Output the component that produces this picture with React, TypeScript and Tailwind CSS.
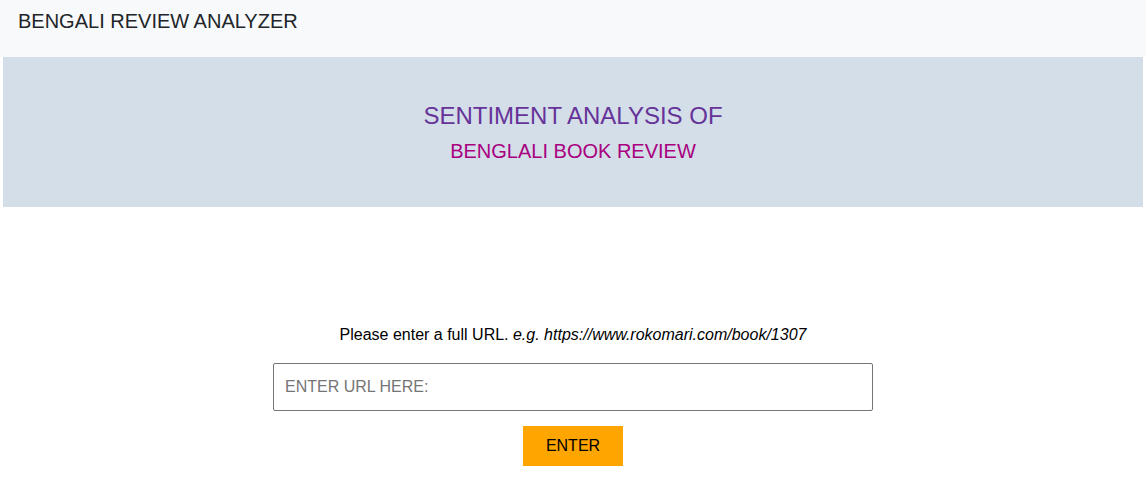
export default function App() {
  return (
    <div className="min-h-[477px] bg-white font-['Liberation_Sans',Arial,sans-serif] text-[#212529]">
      <header className="h-[57px] bg-[#f8f9fa] flex items-center px-[18px]">
        <span className="text-[20px] leading-none text-[#212529] -mt-[15px]">BENGALI REVIEW ANALYZER</span>
      </header>
      <section className="mx-[3px] h-[150px] bg-[#d3dee9] flex flex-col items-center">
        <h1 className="mt-[45px] text-[24px] leading-[28px] text-[#663399]">SENTIMENT ANALYSIS OF</h1>
        <h2 className="mt-[9px] text-[20px] leading-[24px] text-[#a8007e]">BENGLALI BOOK REVIEW</h2>
      </section>
      <div className="flex flex-col items-center pt-[117px]">
        <p className="text-[16px] leading-[22px] text-black">
          Please enter a full URL. <i>e.g. https://www.rokomari.com/book/1307</i>
        </p>
        <input
          type="text"
          placeholder="ENTER URL HERE:"
          className="mt-[17px] w-[600px] h-[48px] border border-[#767676] rounded-[2px] px-[11px] text-[16px] placeholder:text-[#757575] outline-none"
        />
        <button className="mt-[15px] w-[100px] h-[40px] bg-[#ffa500] text-black text-[16px]">
          ENTER
        </button>
      </div>
    </div>
  );
}
